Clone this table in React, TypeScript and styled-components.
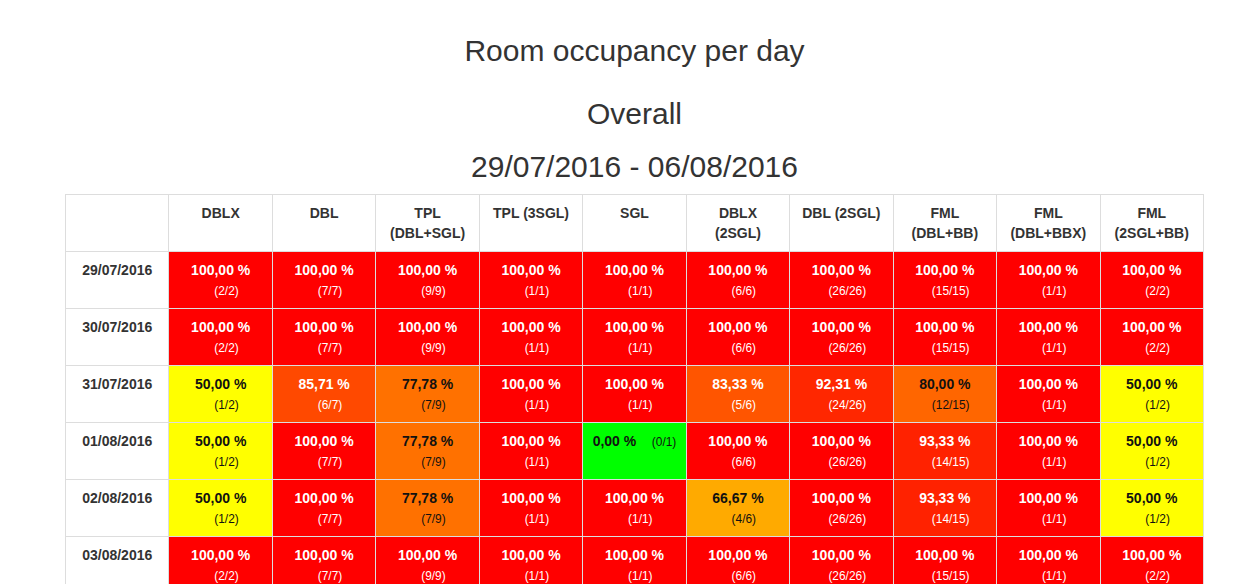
import React from 'react';
import styled, { createGlobalStyle } from 'styled-components';

const rooms = [
  { label: 'DBLX', total: 2 },
  { label: 'DBL', total: 7 },
  { label: 'TPL\n(DBL+SGL)', total: 9 },
  { label: 'TPL (3SGL)', total: 1 },
  { label: 'SGL', total: 1 },
  { label: 'DBLX\n(2SGL)', total: 6 },
  { label: 'DBL (2SGL)', total: 26 },
  { label: 'FML\n(DBL+BB)', total: 15 },
  { label: 'FML\n(DBL+BBX)', total: 1 },
  { label: 'FML\n(2SGL+BB)', total: 2 }
];

// booked rooms per day, same order as the columns
const days = [
  { date: '29/07/2016', booked: [2, 7, 9, 1, 1, 6, 26, 15, 1, 2] },
  { date: '30/07/2016', booked: [2, 7, 9, 1, 1, 6, 26, 15, 1, 2] },
  { date: '31/07/2016', booked: [1, 6, 7, 1, 1, 5, 24, 12, 1, 1] },
  { date: '01/08/2016', booked: [1, 7, 7, 1, 0, 6, 26, 14, 1, 1] },
  { date: '02/08/2016', booked: [1, 7, 7, 1, 1, 4, 26, 14, 1, 1] },
  { date: '03/08/2016', booked: [2, 7, 9, 1, 1, 6, 26, 15, 1, 2] },
  { date: '04/08/2016', booked: [2, 7, 8, 1, 1, 6, 25, 15, 1, 2] },
  { date: '05/08/2016', booked: [2, 6, 9, 1, 1, 6, 26, 13, 1, 2] },
  { date: '06/08/2016', booked: [1, 5, 6, 1, 0, 4, 20, 10, 1, 1] }
];

const occupancyColour = (ratio: number) => {
  const red = ratio >= 0.5 ? 255 : Math.round(ratio * 2 * 255);
  const green = ratio <= 0.5 ? 255 : Math.round((1 - ratio) * 2 * 255);
  return { bg: `rgb(${red}, ${green}, 0)`, dark: green >= 100 };
};

const formatPct = (ratio: number) => `${(ratio * 100).toFixed(2).replace('.', ',')} %`;

const GlobalStyle = createGlobalStyle`
  html, body {
    margin: 0;
    overflow: hidden;
    background: #fff;
  }
  body {
    font-family: "Liberation Sans", Arial, sans-serif;
    font-size: 14px;
    line-height: 20px;
    color: #333;
  }
`;

const Page = styled.main`
  width: 1139px;
  margin-left: 65px;
  padding-top: 34px;
`;

const Title = styled.h2<{ $gap: number }>`
  margin: ${p => p.$gap}px 0 0;
  font-size: 30px;
  font-weight: 500;
  line-height: 33px;
  text-align: center;
  color: #333;
`;

const Table = styled.table`
  width: 100%;
  margin-top: 11px;
  table-layout: fixed;
  border-collapse: collapse;
  border: 1px solid #ddd;
`;

const HeadCell = styled.th`
  padding: 8px;
  border: 1px solid #ddd;
  vertical-align: top;
  text-align: center;
  font-weight: bold;
  white-space: pre-line;
  color: #333;
`;

const DateCell = styled(HeadCell)`
  white-space: nowrap;
`;

const ValueCell = styled.td<{ $bg: string; $dark: boolean }>`
  height: 40px;
  padding: 8px;
  border: 1px solid #ddd;
  vertical-align: top;
  text-align: center;
  background: ${p => p.$bg};
  color: ${p => (p.$dark ? '#111' : '#fff')};
`;

const Pct = styled.b`
  font-weight: bold;
`;

const Count = styled.small`
  font-size: 85%;
  line-height: 1;
`;

export default function App() {
  return (
    <>
      <GlobalStyle />
      <Page>
        <Title $gap={0}>Room occupancy per day</Title>
        <Title $gap={30}>Overall</Title>
        <Title $gap={20}>29/07/2016 - 06/08/2016</Title>
        <Table>
          <thead>
            <tr>
              <HeadCell />
              {rooms.map(room => (
                <HeadCell key={room.label}>{room.label}</HeadCell>
              ))}
            </tr>
          </thead>
          <tbody>
            {days.map(day => (
              <tr key={day.date}>
                <DateCell>{day.date}</DateCell>
                {day.booked.map((booked, i) => {
                  const total = rooms[i].total;
                  const ratio = booked / total;
                  const { bg, dark } = occupancyColour(ratio);
                  return (
                    <ValueCell key={i} $bg={bg} $dark={dark}>
                      <Pct>{formatPct(ratio)}</Pct>
                      {' \u00a0\u00a0\u00a0'}
                      <Count>({booked}/{total})</Count>
                    </ValueCell>
                  );
                })}
              </tr>
            ))}
          </tbody>
        </Table>
      </Page>
    </>
  );
}
